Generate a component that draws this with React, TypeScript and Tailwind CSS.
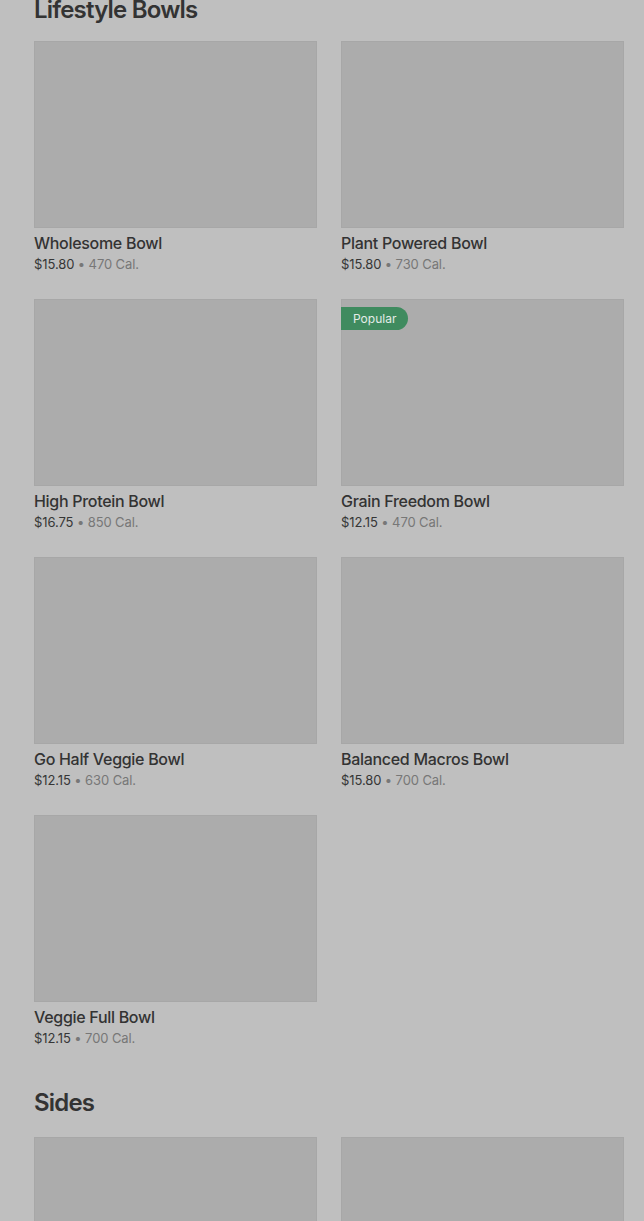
type Item = { name: string; price: string; cal: string; popular?: boolean };

const bowls: Item[] = [
  { name: "Wholesome Bowl", price: "$15.80", cal: "470 Cal." },
  { name: "Plant Powered Bowl", price: "$15.80", cal: "730 Cal." },
  { name: "High Protein Bowl", price: "$16.75", cal: "850 Cal." },
  { name: "Grain Freedom Bowl", price: "$12.15", cal: "470 Cal.", popular: true },
  { name: "Go Half Veggie Bowl", price: "$12.15", cal: "630 Cal." },
  { name: "Balanced Macros Bowl", price: "$15.80", cal: "700 Cal." },
  { name: "Veggie Full Bowl", price: "$12.15", cal: "700 Cal." },
];

function Card({ item }: { item: Item }) {
  return (
    <div>
      <div className="relative h-[187px] bg-[#acacac] border border-[#a7a7a7]">
        {item.popular && (
          <span className="absolute left-[-1px] top-[7px] h-[23px] pl-[12px] pr-[12px] rounded-r-full bg-[#3f8b5f] text-[#e4ece7] text-[12px] leading-[23px]">
            Popular
          </span>
        )}
      </div>
      <div className="mt-[4px] text-[16px] leading-[22px] font-medium tracking-[-0.3px] text-[#333333]">{item.name}</div>
      <div className="text-[13px] leading-[20px] tracking-[-0.1px]">
        <span className="text-[#363636]">{item.price}</span>
        <span className="text-[#777777]"> • {item.cal}</span>
      </div>
    </div>
  );
}

export default function App() {
  return (
    <div className="min-h-[1221px] bg-[#bfbfbf] pl-[34px] pr-[20px] overflow-hidden font-['Inter',sans-serif]">
      <h2 className="-mt-[6px] text-[24px] leading-[32px] font-semibold tracking-[-0.8px] text-[#333333] mb-[15px]">Lifestyle Bowls</h2>
      <div className="grid grid-cols-2 gap-x-[24px] gap-y-[25px]">
        {bowls.map((b) => (
          <Card key={b.name} item={b} />
        ))}
      </div>
      <h2 className="mt-[39px] text-[24px] leading-[32px] font-semibold tracking-[-0.8px] text-[#333333] mb-[18px]">Sides</h2>
      <div className="grid grid-cols-2 gap-x-[24px]">
        <div className="h-[187px] bg-[#acacac] border border-[#a7a7a7]" />
        <div className="h-[187px] bg-[#acacac] border border-[#a7a7a7]" />
      </div>
    </div>
  );
}
